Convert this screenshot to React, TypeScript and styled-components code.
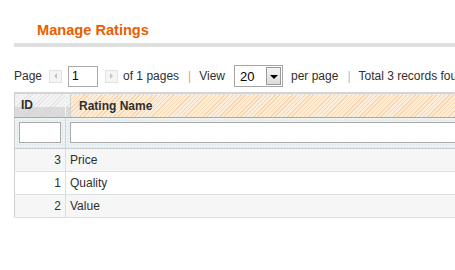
import styled, { createGlobalStyle } from "styled-components";

const GlobalStyle = createGlobalStyle`
  body {
    margin: 0;
    background: #fff;
    font-family: Arial, "Liberation Sans", sans-serif;
    font-size: 12px;
    color: #2f2f2f;
    overflow: hidden;
  }
`;

const Page = styled.div`
  width: 620px;
  padding-left: 14px;
`;

const ContentHeader = styled.div`
  padding: 21px 0 4px 23px;
  border-bottom: 4px solid #dfdfdf;
`;

const Title = styled.h3`
  margin: 0;
  font-size: 14.6px;
  line-height: 18px;
  font-weight: bold;
  color: #eb5e00;
`;

const Pager = styled.div`
  display: flex;
  align-items: center;
  height: 22px;
  margin-top: 18px;
  white-space: nowrap;
`;

const PagerText = styled.span<{ $gap?: number }>`
  margin-left: ${(p) => p.$gap ?? 0}px;
  line-height: 22px;
`;

const Separator = styled.span<{ $color: string }>`
  margin: 0 8px 0 9px;
  color: ${(p) => p.$color};
`;

const ArrowButton = styled.span<{ $dir: "left" | "right" }>`
  display: inline-flex;
  align-items: center;
  justify-content: center;
  box-sizing: border-box;
  width: 13px;
  height: 13px;
  margin-left: 7px;
  border: 1px solid #e2e2e2;
  background: #f5f5f5;

  &::after {
    content: "";
    width: 0;
    height: 0;
    border-top: 3px solid transparent;
    border-bottom: 3px solid transparent;
    ${(p) =>
      p.$dir === "left"
        ? "border-right: 3px solid #c4c4c4;"
        : "border-left: 3px solid #c4c4c4;"}
  }
`;

const PageInput = styled.input`
  box-sizing: border-box;
  width: 30px;
  height: 21px;
  margin: 0 0 0 6px;
  padding: 0 3px;
  border: 1px solid #aaa;
  font: 12px Arial, "Liberation Sans", sans-serif;
  color: #000;
`;

const FakeSelect = styled.div`
  display: flex;
  align-items: center;
  justify-content: space-between;
  box-sizing: border-box;
  width: 49px;
  height: 22px;
  margin-left: 9px;
  padding: 1px 1px 1px 5px;
  border: 1px solid #a5a5a5;
  background: #fff;
  font-size: 13px;
  color: #000;
`;

const SelectButton = styled.span`
  display: flex;
  align-items: center;
  justify-content: center;
  box-sizing: border-box;
  width: 15px;
  height: 18px;
  border: 1px solid #9a9a9a;
  background: linear-gradient(#f4f4f4, #dcdcdc);

  &::after {
    content: "";
    border-left: 4px solid transparent;
    border-right: 4px solid transparent;
    border-top: 4px solid #000;
    margin-top: 1px;
  }
`;

const Grid = styled.table`
  margin-top: 5px;
  width: 606px;
  border-collapse: collapse;
  border-left: 1px solid #cbd1d2;
`;

const HeadCell = styled.th<{ $width?: number }>`
  height: 23px;
  padding: 0;
  width: ${(p) => (p.$width ? `${p.$width}px` : "auto")};
  text-align: left;
  font-size: 12px;
  font-weight: bold;
  color: #2f2f2f;
  border-top: 2px solid #d4d4d4;
  border-right: 1px solid #f3f3f3;
  border-bottom: 1px solid #a9a9a9;
  background:
    linear-gradient(rgba(255, 255, 255, 0) 55%, rgba(205, 205, 205, 0.6) 55%),
    repeating-linear-gradient(135deg, #e2e2e2 0 1px, #f6f6f6 1px 3px);
`;

const HeadLabel = styled.span`
  display: block;
  padding-left: 6px;
  line-height: 23px;
`;

const SortLabel = styled.span`
  display: block;
  margin-left: 4px;
  padding-left: 8px;
  line-height: 22px;
  border-left: 1px solid #cfcfcf;
  border-top: 1px dashed #eaeaea;
  background: repeating-linear-gradient(135deg, #f8d5ad 0 1px, #fdeedc 1px 3px);
`;

const FilterCell = styled.th`
  padding: 4px 4px 5px;
  border-right: 1px solid #cfd6d7;
  border-bottom: 1px solid #c9cfd0;
  background-color: #dfe8ea;
  background-image:
    linear-gradient(90deg, rgba(255, 255, 255, 0.55) 1px, transparent 1px),
    linear-gradient(rgba(255, 255, 255, 0.55) 1px, transparent 1px);
  background-size: 3px 3px;
`;

const FilterInput = styled.input`
  display: block;
  box-sizing: border-box;
  width: 100%;
  height: 21px;
  margin: 0;
  padding: 0 3px;
  border: 1px solid #aaa;
  background: #fff;
`;

const Row = styled.tr<{ $even: boolean }>`
  background: ${(p) => (p.$even ? "#f6f6f6" : "#fff")};
`;

const Cell = styled.td<{ $align?: "left" | "right" }>`
  height: 22px;
  padding: 0 4px;
  text-align: ${(p) => p.$align ?? "left"};
  border-right: 1px solid #dadfe0;
  border-bottom: 1px solid #dadfe0;
  color: #2f2f2f;
`;

const ratings = [
  { id: 3, name: "Price" },
  { id: 1, name: "Quality" },
  { id: 2, name: "Value" },
];

function App() {
  return (
    <Page>
      <GlobalStyle />
      <ContentHeader>
        <Title>Manage Ratings</Title>
      </ContentHeader>

      <Pager>
        <PagerText>Page</PagerText>
        <ArrowButton $dir="left" />
        <PageInput defaultValue="1" />
        <ArrowButton $dir="right" />
        <PagerText $gap={5}>of 1 pages</PagerText>
        <Separator $color="#f0a050">|</Separator>
        <PagerText>View</PagerText>
        <FakeSelect>
          20
          <SelectButton />
        </FakeSelect>
        <PagerText $gap={8}>per page</PagerText>
        <Separator $color="#9cc3dc">|</Separator>
        <PagerText>Total 3 records found</PagerText>
      </Pager>

      <Grid>
        <thead>
          <tr>
            <HeadCell $width={50}>
              <HeadLabel>ID</HeadLabel>
            </HeadCell>
            <HeadCell>
              <SortLabel>Rating Name</SortLabel>
            </HeadCell>
          </tr>
          <tr>
            <FilterCell>
              <FilterInput />
            </FilterCell>
            <FilterCell>
              <FilterInput />
            </FilterCell>
          </tr>
        </thead>
        <tbody>
          {ratings.map((r, i) => (
            <Row key={r.id} $even={i % 2 === 0}>
              <Cell $align="right">{r.id}</Cell>
              <Cell>{r.name}</Cell>
            </Row>
          ))}
        </tbody>
      </Grid>
    </Page>
  );
}

export default App;
